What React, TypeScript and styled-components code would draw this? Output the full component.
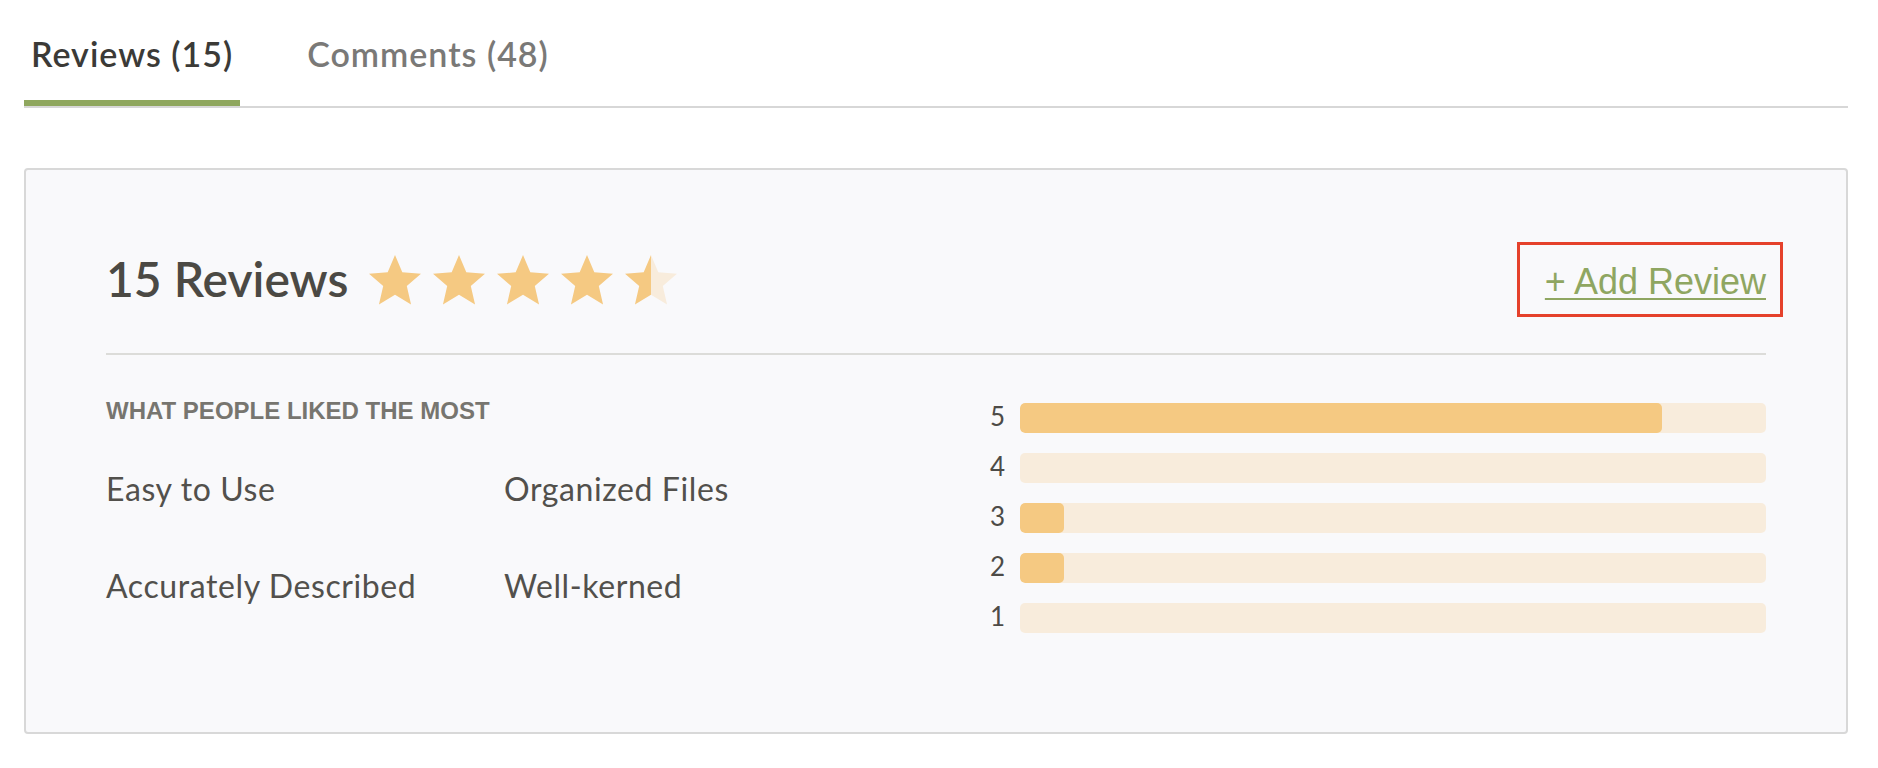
import React from "react";
import styled, { createGlobalStyle } from "styled-components";

const GlobalStyle = createGlobalStyle`
  html, body { margin: 0; padding: 0; background: #ffffff; }
  body { font-family: Lato, "Open Sans", sans-serif; }
  * { box-sizing: content-box; }
`;

const ORANGE = "#f5c982";
const PALE = "#f8ecdc";

const Page = styled.div`
  width: 1824px;
  padding: 0 30px 0 24px;
`;

const TabList = styled.div`
  display: flex;
  gap: 60px;
  padding-top: 34px;
  border-bottom: 2px solid #d7d7d7;
`;

const Tab = styled.button<{ $active?: boolean }>`
  appearance: none;
  background: none;
  border: 0;
  border-bottom: 6px solid ${(p) => (p.$active ? "#8fa75e" : "transparent")};
  padding: 0 7px 25px 7px;
  margin: 0;
  font-family: Lato, sans-serif;
  font-weight: 600;
  font-size: 34px;
  letter-spacing: 1px;
  line-height: 1.2;
  color: ${(p) => (p.$active ? "#3b3a37" : "#7a7977")};
  cursor: pointer;
`;

const Card = styled.section`
  margin-top: 60px;
  background: #f9f9fb;
  border: 2px solid #d8d8d8;
  border-radius: 4px;
  padding: 80px 80px 99px;
`;

const Header = styled.div`
  display: flex;
  align-items: flex-start;
  justify-content: space-between;
  padding-bottom: 46px;
  border-bottom: 2px solid #dcdcd9;
`;

const TitleGroup = styled.div`
  display: flex;
  align-items: center;
  gap: 21px;
`;

const Title = styled.h2`
  margin: 0;
  font-family: Lato, sans-serif;
  font-size: 48px;
  font-weight: 600;
  line-height: 1.2;
  color: #4b4944;
`;

const Stars = styled.div`
  display: flex;
  gap: 12px;
  margin-top: 3px;
`;

const StarSvg = styled.svg`
  display: block;
  width: 52px;
  height: 49.4px;
`;

const AddLink = styled.a`
  position: relative;
  margin-top: 11px;
  font-family: "Liberation Sans", Arial, sans-serif;
  font-size: 36px;
  line-height: 1.15;
  color: #8fa661;
  text-decoration: underline;
  text-decoration-thickness: 2px;
  text-underline-offset: 4px;
  cursor: pointer;

  &::after {
    content: "";
    position: absolute;
    top: -19px;
    left: -28px;
    right: -17px;
    bottom: -15px;
    border: 3px solid #e5412b;
    pointer-events: none;
  }
`;

const Body = styled.div`
  display: flex;
`;

const Liked = styled.div`
  flex: 1;
  padding-top: 42px;
`;

const Label = styled.h3`
  margin: 0;
  font-family: "Liberation Sans", Arial, sans-serif;
  font-weight: 700;
  font-size: 24px;
  line-height: 28px;
  color: #77756f;
`;

const Items = styled.ul`
  list-style: none;
  margin: 45px 0 0;
  padding: 0;
  display: grid;
  grid-template-columns: 398px auto;
  row-gap: 58px;
`;

const Item = styled.li`
  font-family: Lato, sans-serif;
  font-size: 32px;
  letter-spacing: 0.6px;
  line-height: 1.2;
  color: #52504c;
`;

const Ratings = styled.div`
  width: 776px;
  margin-top: 48px;
  display: flex;
  flex-direction: column;
  gap: 20px;
`;

const Row = styled.div`
  display: flex;
  align-items: center;
  height: 30px;
`;

const Num = styled.span`
  width: 30px;
  padding-bottom: 4px;
  font-family: Lato, sans-serif;
  font-size: 26px;
  line-height: 30px;
  color: #4d4b47;
`;

const Track = styled.div`
  flex: 1;
  height: 30px;
  background: ${PALE};
  border-radius: 5px;
  overflow: hidden;
`;

const Fill = styled.div`
  height: 100%;
  background: ${ORANGE};
  border-radius: 5px;
`;

const STAR_PATH =
  "M12 17.27L18.18 21l-1.64-7.03L22 9.24l-7.19-.61L12 2 9.19 8.63 2 9.24l5.46 4.73L5.82 21z";

function Star({ fill, id }: { fill: number; id: string }) {
  return (
    <StarSvg viewBox="2 2 20 19" aria-hidden="true">
      <defs>
        <linearGradient id={id} x1="0" x2="1" y1="0" y2="0">
          <stop offset={fill} stopColor={ORANGE} />
          <stop offset={fill} stopColor={PALE} />
        </linearGradient>
      </defs>
      <path d={STAR_PATH} fill={`url(#${id})`} />
    </StarSvg>
  );
}

const liked = ["Easy to Use", "Organized Files", "Accurately Described", "Well-kerned"];

const ratings = [
  { stars: 5, pct: 86.06 },
  { stars: 4, pct: 0 },
  { stars: 3, pct: 5.9 },
  { stars: 2, pct: 5.9 },
  { stars: 1, pct: 0 },
];

const starFills = [1, 1, 1, 1, 0.5];

export default function App() {
  return (
    <>
      <GlobalStyle />
      <Page>
        <TabList>
          <Tab $active>Reviews (15)</Tab>
          <Tab>Comments (48)</Tab>
        </TabList>
        <Card>
          <Header>
            <TitleGroup>
              <Title>15 Reviews</Title>
              <Stars>
                {starFills.map((f, i) => (
                  <Star key={i} fill={f} id={`star-grad-${i}`} />
                ))}
              </Stars>
            </TitleGroup>
            <AddLink>+ Add Review</AddLink>
          </Header>
          <Body>
            <Liked>
              <Label>WHAT PEOPLE LIKED THE MOST</Label>
              <Items>
                {liked.map((t) => (
                  <Item key={t}>{t}</Item>
                ))}
              </Items>
            </Liked>
            <Ratings>
              {ratings.map((r) => (
                <Row key={r.stars}>
                  <Num>{r.stars}</Num>
                  <Track>
                    <Fill style={{ width: `${r.pct}%` }} />
                  </Track>
                </Row>
              ))}
            </Ratings>
          </Body>
        </Card>
      </Page>
    </>
  );
}
